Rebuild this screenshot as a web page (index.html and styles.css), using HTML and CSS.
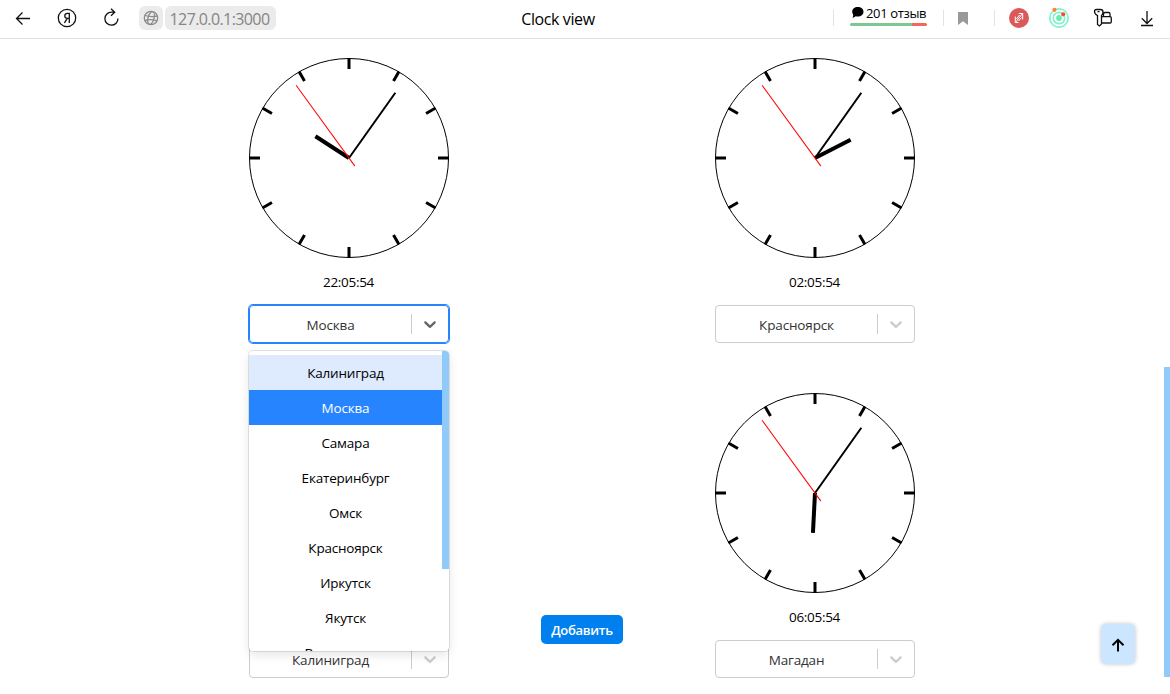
FILE: index.html
```html
<!DOCTYPE html>
<html lang="ru">
<head>
<meta charset="utf-8">
<title>Clock view</title>
<link rel="stylesheet" href="styles.css">
</head>
<body>
<svg class="defs" width="0" height="0">
  <symbol id="dial" viewBox="0 0 200 200">
    <circle cx="100" cy="100" r="99.5" fill="none" stroke="#000"/>
    <g stroke="#000" stroke-width="3">
      <path d="M100 0V11M100 189V200"/>
      <path d="M100 0V11M100 189V200" transform="rotate(30 100 100)"/>
      <path d="M100 0V11M100 189V200" transform="rotate(60 100 100)"/>
      <path d="M100 0V11M100 189V200" transform="rotate(90 100 100)"/>
      <path d="M100 0V11M100 189V200" transform="rotate(120 100 100)"/>
      <path d="M100 0V11M100 189V200" transform="rotate(150 100 100)"/>
    </g>
  </symbol>
  <symbol id="hour" viewBox="0 0 200 200"><path d="M100 100V60" stroke="#000" stroke-width="4"/></symbol>
  <symbol id="fast" viewBox="0 0 200 200">
    <path d="M100 100V20" stroke="#000" stroke-width="2" transform="rotate(35.4 100 100)"/>
    <path d="M100 110V10" stroke="red" stroke-width="1" transform="rotate(324 100 100)"/>
  </symbol>
  <symbol id="chevron" viewBox="0 0 20 20"><path fill="currentColor" d="M4.516 7.548c0.436-0.446 1.043-0.481 1.576 0l3.908 3.747 3.908-3.747c0.533-0.481 1.141-0.446 1.574 0 0.436 0.445 0.408 1.197 0 1.615-0.406 0.418-4.695 4.502-4.695 4.502-0.217 0.223-0.502 0.335-0.787 0.335s-0.57-0.112-0.789-0.335c0 0-4.287-4.084-4.695-4.502s-0.436-1.17 0-1.615z"/></symbol>
</svg>

<header class="bar">
  <div class="nav">
    <svg class="icon" width="20" height="20" viewBox="0 0 20 20"><path d="M17 10.5H3.500M9.500 4.500L3.500 10.500L9.500 16.500"/></svg>
    <svg class="icon" width="20" height="20" viewBox="0 0 20 20"><circle cx="10" cy="10" r="8.700"/><path d="M12.300 15V5.300H10.600C8.700 5.300 7.800 6.500 7.800 7.900C7.800 9.500 8.800 10.300 10.500 10.300H12.300M10.300 10.300L7.400 14.900"/></svg>
    <svg class="icon" width="20" height="20" viewBox="0 0 20 20"><path d="M13.500 4.200H10.500A6.500 6.500 0 1 0 16.900 10.500M10 0.700L13.700 4.200L10 7.700"/></svg>
  </div>
  <div class="address">
    <span class="chip globe"><svg width="16" height="16" viewBox="0 0 16 16"><g fill="none" stroke="#8c8c8c" stroke-width="1.300"><circle cx="8" cy="8" r="6.700"/><ellipse cx="8" cy="8" rx="3" ry="6.500" transform="rotate(15 8 8)"/><path d="M2 5.500Q8 7.300 14 6M2 10.500Q8 8.800 14 10.800"/></g></svg></span>
    <span class="chip url">127.0.0.1:3000</span>
  </div>
  <div class="title">Clock view</div>
  <div class="tools">
    <i class="sep"></i>
    <div class="reviews">
      <div class="reviews-text"><svg width="13" height="13" viewBox="0 0 13 13"><path d="M6.800 1C10 1 12.500 3 12.500 5.800S10 10.600 6.800 10.600C6 10.600 5.300 10.500 4.600 10.300C3.800 11.200 2.500 11.600 1.300 11.500C2 10.800 2.300 9.700 2.200 8.700C1.500 7.900 1.200 6.800 1.200 5.700C1.200 3 3.600 1 6.800 1Z"/></svg><span>201 отзыв</span></div>
      <div class="rating"></div>
    </div>
    <i class="sep"></i>
    <svg class="bookmark" width="10" height="13" viewBox="0 0 10 13"><path d="M0 0H10V13L5 9.200L0 13Z" fill="#999"/></svg>
    <i class="sep"></i>
    <svg class="ext" width="20" height="20" viewBox="0 0 20 20"><circle cx="10" cy="10" r="10" fill="#db5959"/><path d="M6.300 8.500V14.500H9.500M9.800 5.500H13.700V11.500M6.500 14.300L13.500 5.700M10.500 7L7.500 11M12.500 9.500L9.500 13" fill="none" stroke="#fff" stroke-width="1"/></svg>
    <svg class="ext2" width="22" height="22" viewBox="0 0 22 22"><g fill="none" stroke="#83f3cd" stroke-width="1.700"><circle cx="11" cy="12" r="9.200"/><circle cx="11" cy="12" r="5.700"/></g><circle cx="11" cy="12" r="2.900" fill="#65efad"/><circle cx="6.500" cy="3.800" r="2.100" fill="#f98236"/><circle cx="15.200" cy="8.300" r="2.100" fill="#ef5030"/></svg>
    <svg class="icon keys" width="20" height="20" viewBox="0 0 20 20"><path d="M3.500 1.500H7.500Q10 1.500 10 4Q10 6.300 8.500 7.500V16L6.500 18L4.500 16.500V7.500Q1.500 6 1.500 3.500Q1.500 1.500 3.500 1.500ZM4.500 3.700H6.500M10.500 8.500V6Q10.500 4.500 12 4.500H15.500Q17 4.500 17 6V8.500M8.500 8.700H17Q18.300 8.700 18.300 10V13.800Q18.300 15 17 15H8.500"/></svg>
    <svg class="icon" width="16" height="20" viewBox="0 0 16 20"><path d="M8 3V15.500M2.800 10.300L8 15.500L13.200 10.300M2 17.500H14"/></svg>
  </div>
</header>

<main class="page">
  <div class="clocks">
    <section class="clock">
      <svg class="face" viewBox="0 0 200 200"><use href="#dial"/><use href="#hour" transform="rotate(302.950 100 100)"/><use href="#fast"/></svg>
      <p class="time">22:05:54</p>
      <div class="select focused"><span class="value">Москва</span><i class="divider"></i><svg class="chevron"><use href="#chevron"/></svg>
        <div class="menu">
          <ul class="options">
            <li class="hover">Калиниград</li>
            <li class="selected">Москва</li>
            <li>Самара</li>
            <li>Екатеринбург</li>
            <li>Омск</li>
            <li>Красноярск</li>
            <li>Иркутск</li>
            <li>Якутск</li>
            <li>Владивосток</li>
          </ul>
          <div class="menu-thumb"></div>
        </div>
      </div>
    </section>
    <section class="clock">
      <svg class="face" viewBox="0 0 200 200"><use href="#dial"/><use href="#hour" transform="rotate(62.950 100 100)"/><use href="#fast"/></svg>
      <p class="time">02:05:54</p>
      <div class="select"><span class="value">Красноярск</span><i class="divider"></i><svg class="chevron"><use href="#chevron"/></svg></div>
    </section>
    <section class="clock">
      <div class="face"></div>
      <p class="time"></p>
      <div class="select"><span class="value">Калиниград</span><i class="divider"></i><svg class="chevron"><use href="#chevron"/></svg></div>
    </section>
    <section class="clock">
      <svg class="face" viewBox="0 0 200 200"><use href="#dial"/><use href="#hour" transform="rotate(182.950 100 100)"/><use href="#fast"/></svg>
      <p class="time">06:05:54</p>
      <div class="select"><span class="value">Магадан</span><i class="divider"></i><svg class="chevron"><use href="#chevron"/></svg></div>
    </section>
  </div>
  <button class="add">Добавить</button>
  <button class="to-top"><svg width="14" height="14" viewBox="0 0 14 14"><path d="M7 13.500V2M1.500 7.200L7 1.800L12.500 7.200" fill="none" stroke="#000" stroke-width="2"/></svg></button>
  <div class="page-thumb"></div>
</main>
</body>
</html>
```
FILE: styles.css
```css
* { box-sizing: border-box; }
body {
  margin: 0;
  width: 1170px;
  height: 694px;
  overflow: hidden;
  background: #fff;
  color: #000;
  font: 13.5px/20px "Open Sans", "Noto Sans", sans-serif;
}
.defs { position: absolute; }
svg { display: block; flex: none; }

.bar {
  display: grid;
  grid-template-columns: 480px 156px 1fr;
  align-items: center;
  height: 39px;
  padding-bottom: 2px;
  border-bottom: 1px solid #e3e3e3;
}
.icon { fill: none; stroke: #111; stroke-width: 1.3; }
.nav { grid-column: 1; grid-row: 1; display: flex; gap: 24px; padding-left: 13px; }
.address { grid-column: 1; grid-row: 1; display: flex; gap: 2px; padding-left: 139px; }
.chip {
  display: flex;
  align-items: center;
  justify-content: center;
  height: 24px;
  border-radius: 6px;
  background: #ebebeb;
}
.globe { width: 24px; }
.url { width: 111px; padding-top: 1px; padding-right: 2px; color: #858585; font-size: 16px; letter-spacing: -0.6px; white-space: nowrap; }
.title { padding-top: 1px; text-align: center; font-size: 16px; letter-spacing: -0.4px; }
.tools { display: flex; align-items: center; padding-left: 197px; }
.sep { width: 1px; height: 16px; background: #e3e3e3; flex: none; }
.reviews { width: 77px; margin: -6px 16px 0; }
.reviews-text { display: flex; align-items: center; gap: 2px; height: 17px; padding-left: 1px; font-size: 13px; letter-spacing: -0.35px; white-space: nowrap; }
.rating { height: 3px; margin-top: 2px; border-radius: 2px; background: linear-gradient(90deg, #7bc893 62px, #f0695c 62px); }
.bookmark { margin: 0 26px 0 14px; }
.ext { margin-left: 14px; }
.ext2 { margin: -2px 23px 0 19px; }
.keys { margin-right: 26px; }

.page { position: relative; height: 655px; padding: 19px 122px 0 116px; }
.clocks { display: grid; grid-template-columns: 466px 466px; row-gap: 50px; }
.clock { display: flex; flex-direction: column; align-items: center; height: 285px; }
.face { width: 200px; height: 200px; overflow: visible; }
.time { height: 20px; margin: 14px 0 13px; padding-right: 1px; letter-spacing: -0.3px; }
.select {
  position: relative;
  display: flex;
  align-items: center;
  width: 200px;
  height: 38px;
  border: 1px solid #ccc;
  border-radius: 4px;
  color: #ccc;
}
.focused { border-color: #2684ff; box-shadow: 0 0 0 1px #2684ff; color: #666; }
.value { flex: 1; padding-top: 1px; text-align: center; color: #333; letter-spacing: -0.15px; }
.divider { width: 1px; height: 20px; background: #ccc; }
.chevron { width: 20px; height: 20px; margin: 0 8px; }
.menu {
  position: absolute;
  z-index: 2;
  top: 45px;
  left: -1px;
  display: flex;
  width: 200px;
  height: 300px;
  overflow: hidden;
  border-radius: 4px;
  background: #fff;
  box-shadow: 0 0 0 1px rgba(0, 0, 0, 0.1), 0 4px 11px rgba(0, 0, 0, 0.1);
  color: #000;
}
.options { flex: 1; margin: 0; padding: 4px 0; list-style: none; text-align: center; letter-spacing: -0.2px; }
.options li { height: 35px; padding-top: 8px; }
.options .hover { background: #deebff; }
.options .selected { background: #2684ff; color: #fff; }
.menu-thumb { width: 7px; height: 218px; background: #90caf9; }

.add {
  position: absolute;
  left: 541px;
  top: 576px;
  width: 82px;
  height: 29px;
  padding: 1px 0 0;
  border: 0;
  border-radius: 5px;
  background: #0080ee;
  color: #fff;
  font: 600 13px/28px "Open Sans", sans-serif;
  letter-spacing: -0.3px;
}
.to-top {
  position: absolute;
  left: 1101px;
  top: 585px;
  display: flex;
  align-items: center;
  justify-content: center;
  width: 34px;
  height: 40px;
  padding: 2px 0 0;
  border: 0;
  border-radius: 5px;
  background: #cce6ff;
  box-shadow: 0 0 4px rgba(0, 0, 0, 0.25);
}
.page-thumb { position: absolute; right: 0; top: 328px; width: 6px; height: 310px; background: #90caf9; }
```
